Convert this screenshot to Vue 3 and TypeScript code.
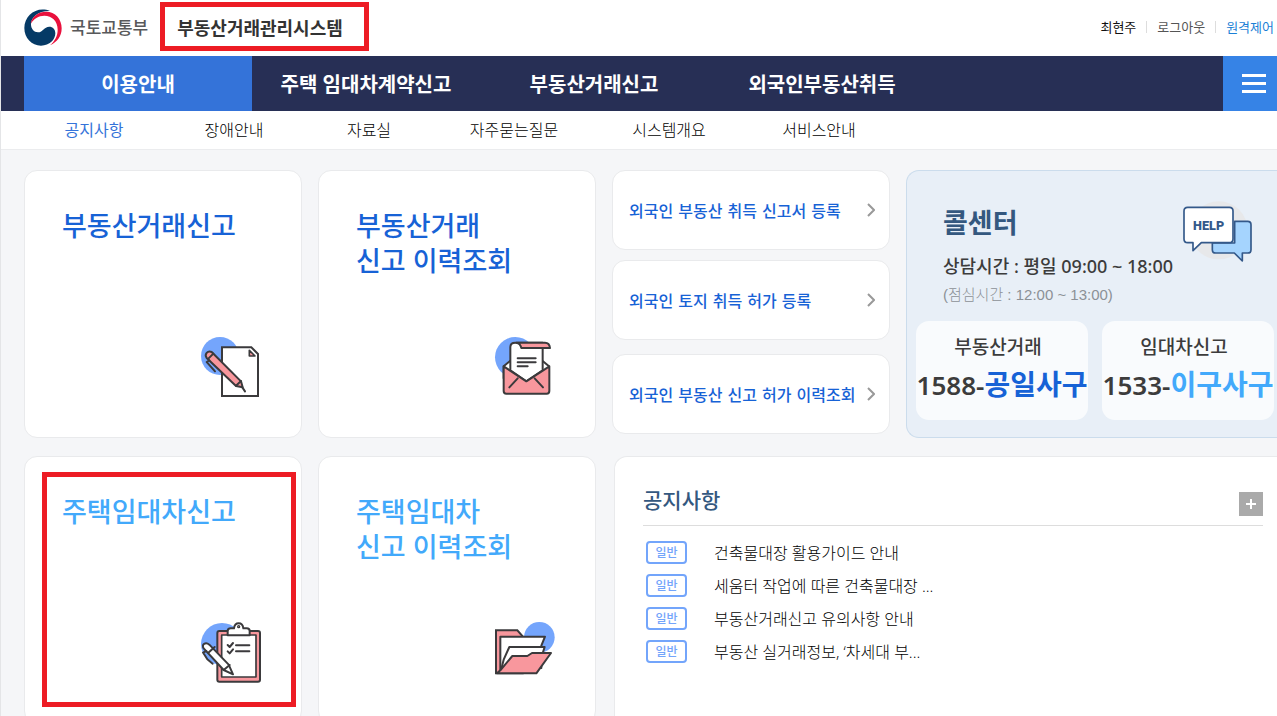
<script setup lang="ts">
interface Tile { lines: string[]; icon: 'contract' | 'letter' | 'clipboard' | 'folder'; rent?: boolean; marked?: boolean }

const mainMenu: string[] = ['이용안내', '주택 임대차계약신고', '부동산거래신고', '외국인부동산취득']
const subMenu: string[] = ['공지사항', '장애안내', '자료실', '자주묻는질문', '시스템개요', '서비스안내']
const tiles: Tile[] = [
  { lines: ['부동산거래신고'], icon: 'contract' },
  { lines: ['부동산거래', '신고 이력조회'], icon: 'letter' },
  { lines: ['주택임대차신고'], icon: 'clipboard', rent: true, marked: true },
  { lines: ['주택임대차', '신고 이력조회'], icon: 'folder', rent: true },
]
const foreignLinks: string[] = ['외국인 부동산 취득 신고서 등록', '외국인 토지 취득 허가 등록', '외국인 부동산 신고 허가 이력조회']
const phones = [
  { label: '부동산거래', prefix: '1588-', word: '공일사구', rent: false },
  { label: '임대차신고', prefix: '1533-', word: '이구사구', rent: true },
]
const notices: string[] = ['건축물대장 활용가이드 안내', '세움터 작업에 따른 건축물대장 ...', '부동산거래신고 유의사항 안내', '부동산 실거래정보, ‘차세대 부...']

// Each sub-menu cell grows with the length of its label.
const cellWidth = (label: string): string => `${100 + label.length * 10}px`
</script>

<template>
  <div class="page">
    <header class="top">
      <a class="brand" href="#">
        <svg class="emblem" viewBox="0 0 114 114" aria-hidden="true">
          <path fill="#053a66" d="M78 6C40-10 1 18 1 57c0 30 22 53 50 53 26 0 43-18 43-37 0-13-8-20-18-20-16 0-19 17-34 17-12 0-21-10-21-24C21 24 44 5 78 6Z" />
          <path fill="#e9113d" d="M20 44C24 21 44 8 66 8c28 0 47 22 47 50 0 24-13 41-35 51 15-14 23-28 23-47 0-26-17-42-40-42-18 0-31 9-41 24Z" />
        </svg>
        <span class="ministry">국토교통부</span>
      </a>
      <a class="system" href="#">부동산거래관리시스템</a>
      <nav class="utility" aria-label="사용자 메뉴">
        <a href="#" class="user">최현주</a>
        <a href="#">로그아웃</a>
        <a href="#" class="remote">원격제어</a>
      </nav>
    </header>

    <nav class="main-nav" aria-label="주 메뉴">
      <a v-for="(item, i) in mainMenu" :key="item" href="#" :class="['main-link', { current: i === 0 }]">{{ item }}</a>
      <button class="burger" type="button" aria-label="전체 메뉴"><i></i><i></i><i></i></button>
    </nav>
    <nav class="sub-nav" aria-label="하위 메뉴">
      <a v-for="(item, i) in subMenu" :key="item" href="#" :class="{ current: i === 0 }" :style="{ width: cellWidth(item) }">{{ item }}</a>
    </nav>

    <main class="board">
      <a v-for="(tile, i) in tiles" :key="i" href="#" :class="['tile', `t${i}`, { rent: tile.rent }]">
        <span v-if="tile.marked" class="mark"></span>
        <h2><span v-for="line in tile.lines" :key="line">{{ line }}</span></h2>
        <svg class="tile-icon" viewBox="0 0 240 240" aria-hidden="true" fill="none" stroke="#3b3a3c" stroke-width="6" stroke-linejoin="round" stroke-linecap="round">
          <template v-if="tile.icon === 'contract'">
            <circle cx="87" cy="93" r="57" fill="#74a5fc" stroke="none" />
            <path fill="#fff" stroke-linejoin="miter" d="M93 67h88l20 20v126H93Z" />
            <path fill="#f8979d" stroke-width="5" d="M175 76v17h17Z" />
            <path fill="#f8979d" d="M47 99c-8-12 3-23 15-18l88 88 5 18-20-4Z" />
            <path d="m52 101 15-15M135 182l15-14M154 187l8 12M47 111l8-5M48 112l24 27" />
          </template>
          <template v-else-if="tile.icon === 'letter'">
            <circle cx="91" cy="97" r="61" fill="#74a5fc" stroke="none" />
            <path fill="#fff" d="m56 124 20-17h96l20 17v36H56Z" />
            <path fill="#fff" d="M76 136V66c0-8 6-13 15-13h82v83l-49 33Z" />
            <path fill="#f8979d" d="M94 53h86c8 0 14 6 15 16h-86c-2-9-6-15-15-16Z" />
            <path fill="#f8979d" d="m56 124 68 45 69-45v74c0 5-3 8-8 8H64c-5 0-8-3-8-8Z" />
            <path d="m73 187 25-27m51 0 25 27M98 100h54M98 112h54M98 124h30" />
          </template>
          <template v-else-if="tile.icon === 'clipboard'">
            <circle cx="93" cy="99" r="63" fill="#74a5fc" stroke="none" />
            <rect x="79" y="60" width="128" height="152" rx="6" fill="#f8979d" />
            <path fill="#fff" stroke-width="5" d="M92 72h103v126H92Z" />
            <path fill="#fff" d="M110 73V60q0-8 9-8h10q2-15 14-15t14 15h10q9 0 9 8v13Z" />
            <circle cx="143" cy="47" r="2" />
            <path d="m110 102 6 6 10-12m-16 25 6 6 10-12M135 103h40M135 121h40" />
            <path fill="#fff" d="M38 112c-8-12 6-20 17-11l58 60 13 29-28-13Z" />
            <path d="m52 125 19-17M98 177l18-15M36 125l10-5M37 126l12 19 16 13" />
          </template>
          <template v-else>
            <circle cx="163" cy="79" r="46" fill="#74a5fc" stroke="none" />
            <path fill="#f8979d" stroke-linejoin="miter" d="M33 58h64l16 18v111H33Z" />
            <path fill="#fff" d="M46 77h134l-11 27v67L46 178Z" />
            <path fill="#fff" d="m56 146 17-38h106l-18 56-113 14Z" />
            <path fill="#f8979d" d="M36 187h118l44-61h-57l-14 9H82l-36 43Z" />
          </template>
        </svg>
      </a>

      <div class="foreign">
        <a v-for="item in foreignLinks" :key="item" href="#">
          <span>{{ item }}</span>
          <svg viewBox="0 0 8 14" aria-hidden="true"><path d="m1 1 6 6-6 6" fill="none" stroke="#999" stroke-width="2" /></svg>
        </a>
      </div>

      <section class="call">
        <div class="call-head">
          <div>
            <h2>콜센터</h2>
            <p class="hours">상담시간 : 평일 09:00 ~ 18:00</p>
            <p class="lunch">(점심시간 : 12:00 ~ 13:00)</p>
          </div>
          <svg class="help" viewBox="0 0 210 186" role="img" aria-label="HELP" stroke="#34598a" stroke-width="5" stroke-linejoin="round">
            <circle cx="107" cy="88" r="87" fill="#e7e8ea" stroke="none" />
            <path fill="#a5d4fe" d="M155 61h39q10 0 10 10v75q0 10-10 10h-16v24l-24-24H98q-10 0-10-10v-20h67Z" />
            <path fill="#fff" d="M14 19h125q11 0 11 11v84q0 11-11 11H55l-25 24v-24H14q-11 0-11-11V30q0-11 11-11Z" />
            <text x="77" y="88" text-anchor="middle">HELP</text>
          </svg>
        </div>
        <div class="phones">
          <div v-for="phone in phones" :key="phone.label" class="phone">
            <span class="phone-label">{{ phone.label }}</span>
            <strong>{{ phone.prefix }}<em :class="{ rent: phone.rent }">{{ phone.word }}</em></strong>
          </div>
        </div>
      </section>

      <section class="notice">
        <div class="notice-head">
          <h2>공지사항</h2>
          <button type="button" aria-label="공지사항 더보기"><svg viewBox="0 0 24 24" aria-hidden="true"><path d="M12 7v10M7 12h10" stroke="#fff" stroke-width="2" /></svg></button>
        </div>
        <ul>
          <li v-for="item in notices" :key="item"><span class="badge">일반</span><a href="#">{{ item }}</a></li>
        </ul>
      </section>
    </main>
  </div>
</template>

<style>
body { margin: 0; background: #f5f6f8; }
</style>

<style scoped>
* { box-sizing: border-box; }
.page {
  height: 100vh; overflow: hidden; display: flex; flex-direction: column;
  border-left: 1px solid #e4e5e7; background: #f5f6f8;
  font-family: "Noto Sans", "Noto Sans CJK KR", sans-serif; color: #111;
}
a { color: inherit; text-decoration: none; }
h2, p, ul { margin: 0; padding: 0; }
h2 { font-weight: 500; }
button { border: 0; padding: 0; }

.top { flex: none; height: 56px; display: flex; align-items: center; padding: 0 3px 3px 23px; background: #fff; }
.brand { display: flex; align-items: center; gap: 8px; padding-top: 3px; }
.emblem { width: 38px; height: 38px; }
.ministry { font-size: 17px; line-height: 24px; font-weight: 500; color: #58595b; }
.system {
  height: 49px; margin-left: 12px; padding: 0 21px 0 12px; border: 5px solid #ed1c24;
  display: flex; align-items: center; font-size: 18px; font-weight: 700; color: #333;
}
.utility { margin-left: auto; display: flex; font-size: 13px; line-height: 12px; color: #555; }
.utility a + a { margin-left: 10px; padding-left: 10px; border-left: 1px solid #ddd; }
.utility .user { color: #111; }
.utility .remote { color: #1b7fd6; }

.main-nav { flex: none; height: 55px; display: flex; align-items: stretch; padding-left: 23px; background: #272f55; }
.main-link { width: 228px; display: flex; align-items: center; justify-content: center; color: #fff; font-size: 20px; font-weight: 700; }
.main-link.current { background: #3473d9; }
.burger { width: 54px; margin-left: auto; padding-left: 8px; background: #3683e6; display: flex; flex-direction: column; align-items: center; justify-content: center; gap: 5px; }
.burger i { width: 24px; height: 3px; background: #fff; }

.sub-nav { flex: none; height: 39px; display: flex; align-items: center; padding: 0 0 2px 23px; background: #fff; border-bottom: 1px solid #ebecee; font-size: 16px; font-weight: 300; text-align: center; color: #000; }
.sub-nav .current { color: #3473d9; font-weight: 400; }

.board {
  flex: 1; display: grid; grid-template-columns: 278px 278px 278px minmax(0, 1fr);
  grid-template-rows: 268px 268px; gap: 18px 16px; padding: 20px 0 0 23px;
}
.tile { position: relative; display: flex; flex-direction: column; justify-content: space-between; padding: 37px 30px 32px 37px; background: #fff; border: 1px solid #e9eaec; border-radius: 13px; color: #1762d6; }
.tile.rent { color: #42a9fb; }
.t0, .t2 { grid-column: 1; }
.t1, .t3 { grid-column: 2; }
.t0, .t1 { grid-row: 1; }
.t2, .t3 { grid-row: 2; }
.tile h2 { font-size: 27px; line-height: 35px; }
.tile h2 span { display: block; }
.tile-icon { width: 80px; height: 80px; align-self: flex-end; }
.mark { position: absolute; inset: 15px 5px 16px 17px; border: 5px solid #ed1c24; }

.foreign { grid-column: 3; grid-row: 1; display: flex; flex-direction: column; gap: 10px; }
.foreign a { height: 80px; display: flex; align-items: center; justify-content: space-between; padding: 0 14px 0 16px; background: #fff; border: 1px solid #e9eaec; border-radius: 13px; font-family: "DejaVu Sans", "Noto Sans CJK KR", sans-serif; font-size: 16px; font-weight: 500; color: #1762d6; white-space: nowrap; }
.foreign a:last-child { margin-top: 4px; }
.foreign svg { width: 8px; height: 14px; flex: none; }

.call { grid-column: 4; grid-row: 1; padding: 30px 3px 0 9px; background: #e8eff7; border: 1px solid #cbdcec; border-right: 0; border-radius: 13px 0 0 13px; }
.call-head { display: flex; justify-content: space-between; height: 120px; padding: 0 21px 0 27px; }
.call-head > div { padding-top: 2px; white-space: nowrap; }
.call h2 { font-size: 27px; line-height: 40px; font-weight: 700; color: #34587f; }
.hours { font-size: 18px; line-height: 46px; font-weight: 500; color: #3c3c3c; }
.lunch { font-size: 15px; line-height: 12px; font-weight: 300; color: #8c9196; font-family: "Liberation Sans", "Noto Sans CJK KR", sans-serif; }
.help { width: 70px; height: 62px; flex: none; }
.help text { font: 900 38px Roboto, "Liberation Sans", sans-serif; fill: #34598a; stroke: none; }
.phones { display: grid; grid-template-columns: 1fr 1fr; gap: 14px; }
.phone { height: 99px; padding-top: 9px; display: flex; flex-direction: column; align-items: center; background: #f9fbfd; border-radius: 13px; white-space: nowrap; color: #3c3c3c; }
.phone-label { padding-right: 8px; font-size: 19px; line-height: 35px; font-weight: 500; }
.phone strong { font-size: 26px; line-height: 38px; font-weight: 600; }
.phone em { font-size: 28px; font-style: normal; color: #1762d6; }
.phone em.rent { color: #42a9fb; }

.notice { grid-column: 3 / 5; grid-row: 2; margin-left: 2px; padding: 25px 14px 0 28px; background: #fff; border: 1px solid #e9eaec; border-right: 0; border-radius: 13px 0 0 0; }
.notice-head { height: 44px; display: flex; justify-content: space-between; border-bottom: 1px solid #ddd; }
.notice h2 { font-size: 21px; line-height: 36px; color: #34587f; }
.notice button { width: 24px; height: 24px; margin-top: 10px; background: #aaa; }
.notice button svg { display: block; width: 24px; height: 24px; }
.notice ul { list-style: none; padding: 10px 0 0 3px; }
.notice li { height: 33px; display: flex; align-items: center; gap: 27px; }
.badge { width: 41px; height: 23px; border: 2px solid #73a5fb; border-radius: 4px; font-size: 12px; line-height: 19px; text-align: center; color: #73a5fb; font-weight: 500; }
.notice li a { padding-bottom: 2px; font-family: "Open Sans", "Noto Sans CJK KR", sans-serif; font-size: 16px; font-weight: 300; color: #000; }
</style>
